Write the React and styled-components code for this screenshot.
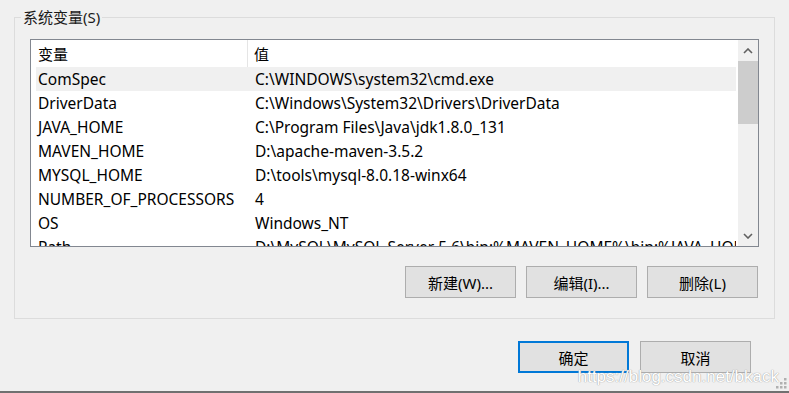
import React from "react";
import styled, { createGlobalStyle } from "styled-components";

const Global = createGlobalStyle`
  html, body { margin: 0; padding: 0; background: #f0f0f0; }
  body {
    font-family: "Noto Sans", "Noto Sans CJK SC", sans-serif;
    font-size: 15.5px;
    color: #000;
  }
`;

const Dialog = styled.div`
  position: relative;
  width: 789px;
  height: 393px;
  box-sizing: border-box;
  background: #f0f0f0;
  padding: 17px 14px 0 14px;
  border-bottom: 2px solid #707070;
  overflow: hidden;
`;

const Group = styled.section`
  position: relative;
  height: 302px;
  box-sizing: border-box;
  border: 1px solid #dcdcdc;
  padding: 21px 15px 0 15px;
`;

const GroupTitle = styled.span`
  position: absolute;
  top: -11px;
  left: 6px;
  padding: 0 2px;
  background: #f0f0f0;
  font-family: "Noto Sans", "Noto Sans CJK SC", sans-serif;
  font-size: 15px;
  line-height: 20px;
  color: #1a1a1a;
`;

const ListBox = styled.div`
  display: flex;
  height: 208px;
  box-sizing: border-box;
  border: 1px solid #828790;
  background: #fff;
`;

const ListBody = styled.div`
  flex: 1;
  min-width: 0;
  display: flex;
  flex-direction: column;
  overflow: hidden;
  padding-left: 5px;
`;

const Row = styled.div`
  display: flex;
  align-items: center;
  flex: none;
  height: ${({ $head }) => ($head ? "27px" : "24px")};
  background: ${({ $sel }) => ($sel ? "#f0f0f0" : "transparent")};
  white-space: nowrap;
`;

const NameCell = styled.div`
  flex: none;
  width: 212px;
  box-sizing: border-box;
  padding-left: 2px;
  height: 100%;
  display: flex;
  align-items: center;
  border-right: ${({ $head }) => ($head ? "1px solid #e5e5e5" : "none")};
  font-size: ${({ $head }) => ($head ? "15px" : "15.5px")};
`;

const ValueCell = styled.div`
  padding-left: ${({ $head }) => ($head ? "6px" : "7px")};
  font-size: ${({ $head }) => ($head ? "15px" : "15.5px")};
`;

const ScrollBar = styled.div`
  flex: none;
  width: 20px;
  margin-left: 2px;
  background: #f0f0f0;
  display: flex;
  flex-direction: column;
`;

const Arrow = styled.div`
  flex: none;
  height: 21px;
  display: flex;
  align-items: center;
  justify-content: center;
`;

const Track = styled.div`
  flex: 1;
  display: flex;
  flex-direction: column;
`;

const Thumb = styled.div`
  height: 63px;
  background: #cdcdcd;
`;

const ButtonRow = styled.div`
  display: flex;
  justify-content: flex-end;
  gap: 10px;
  margin-top: 19px;
  padding-right: 1px;
`;

const Button = styled.button`
  width: 111px;
  height: 32px;
  box-sizing: border-box;
  background: #e1e1e1;
  border: ${({ $default }) => ($default ? "2px solid #0078d7" : "1px solid #adadad")};
  font-family: "Noto Sans", "Noto Sans CJK SC", sans-serif;
  font-size: 15px;
  color: #000;
  padding: 0;
`;

const Footer = styled.div`
  display: flex;
  justify-content: flex-end;
  gap: 11px;
  margin-top: 22px;
  padding-right: 24px;
`;

const Watermark = styled.span`
  position: absolute;
  right: 10px;
  bottom: 4px;
  font-family: "Liberation Sans", Arial, sans-serif;
  font-size: 17px;
  color: #ffffff;
  text-shadow: 0 0 1px #9a9a9a, 0 0 1px #b0b0b0;
  pointer-events: none;
`;

const Grip = styled.svg`
  position: absolute;
  right: 2px;
  bottom: 2px;
`;

const rows = [
  ["ComSpec", "C:\\WINDOWS\\system32\\cmd.exe"],
  ["DriverData", "C:\\Windows\\System32\\Drivers\\DriverData"],
  ["JAVA_HOME", "C:\\Program Files\\Java\\jdk1.8.0_131"],
  ["MAVEN_HOME", "D:\\apache-maven-3.5.2"],
  ["MYSQL_HOME", "D:\\tools\\mysql-8.0.18-winx64"],
  ["NUMBER_OF_PROCESSORS", "4"],
  ["OS", "Windows_NT"],
  ["Path", "D:\\MySQL\\MySQL Server 5.6\\bin;%MAVEN_HOME%\\bin;%JAVA_HOME%\\bin"],
];

const Chevron = ({ down }) => (
  <svg width="10" height="6" viewBox="0 0 10 6">
    <path
      d={down ? "M1 1 L5 5 L9 1" : "M1 5 L5 1 L9 5"}
      fill="none"
      stroke="#606060"
      strokeWidth="1.6"
    />
  </svg>
);

export default function App() {
  return (
    <>
      <Global />
      <Dialog>
        <Group>
          <GroupTitle>系统变量(S)</GroupTitle>
          <ListBox>
            <ListBody>
              <Row $head>
                <NameCell $head>变量</NameCell>
                <ValueCell $head>值</ValueCell>
              </Row>
              {rows.map(([name, value], i) => (
                <Row key={name} $sel={i === 0}>
                  <NameCell>{name}</NameCell>
                  <ValueCell>{value}</ValueCell>
                </Row>
              ))}
            </ListBody>
            <ScrollBar>
              <Arrow><Chevron /></Arrow>
              <Track><Thumb /></Track>
              <Arrow><Chevron down /></Arrow>
            </ScrollBar>
          </ListBox>
          <ButtonRow>
            <Button>新建(W)...</Button>
            <Button>编辑(I)...</Button>
            <Button>删除(L)</Button>
          </ButtonRow>
        </Group>
        <Footer>
          <Button $default>确定</Button>
          <Button>取消</Button>
        </Footer>
        <Watermark>https://blog.csdn.net/bkack</Watermark>
        <Grip width="12" height="12" viewBox="0 0 12 12">
          {[[9, 1], [5, 5], [9, 5], [1, 9], [5, 9], [9, 9]].map(([x, y]) => (
            <rect key={`${x}-${y}`} x={x} y={y} width="2.5" height="2.5" fill="#b0b0b0" />
          ))}
        </Grip>
      </Dialog>
    </>
  );
}
